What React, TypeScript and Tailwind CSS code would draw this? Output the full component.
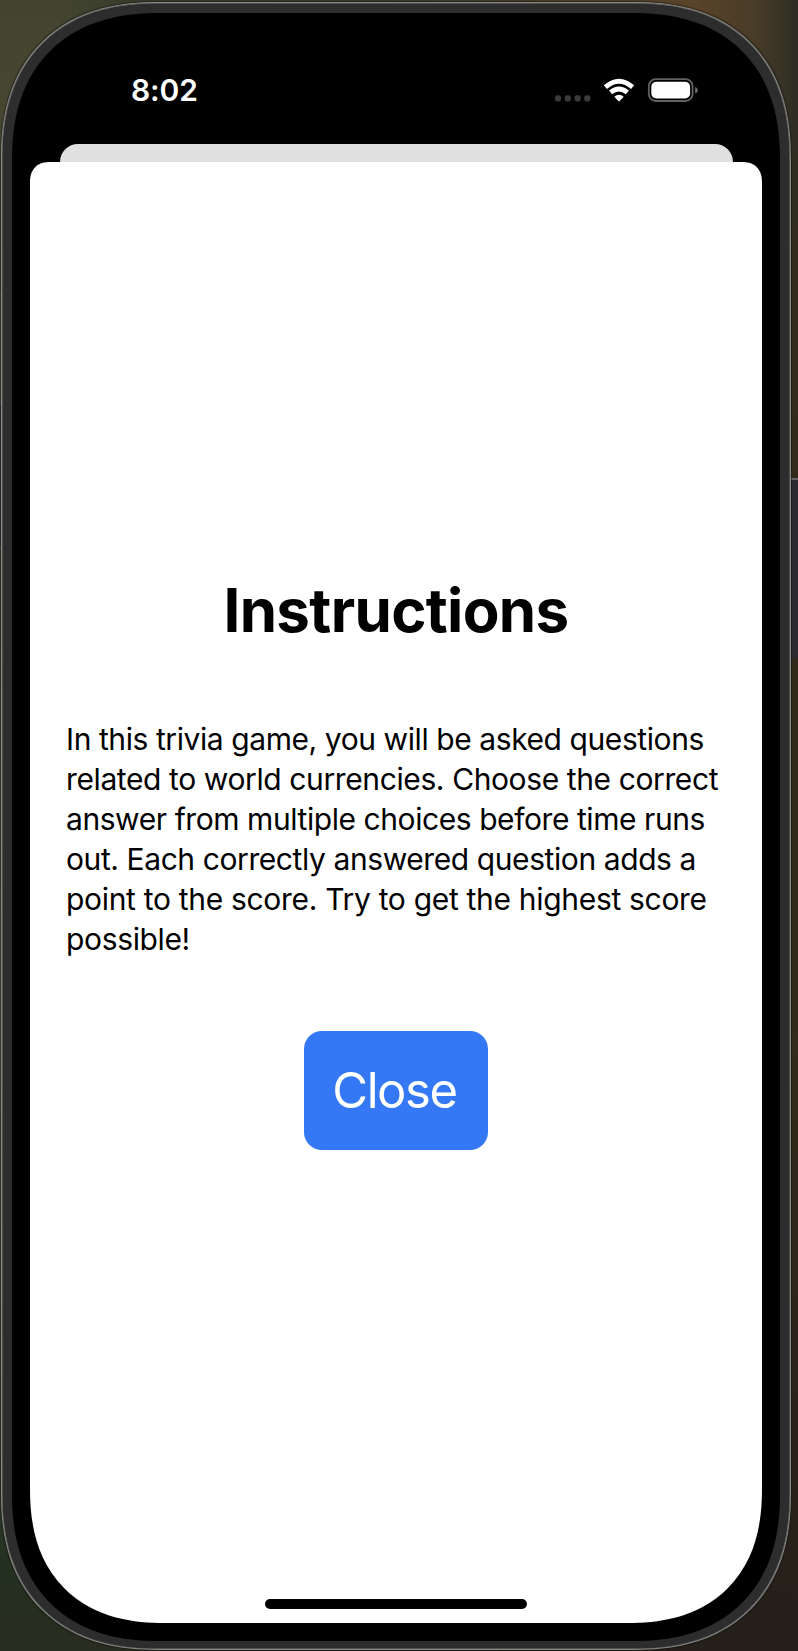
import React from "react";

const instructions: { text: string; spacing: string }[] = [
  { text: "In this trivia game, you will be asked questions", spacing: "tracking-[-0.42px]" },
  { text: "related to world currencies. Choose the correct", spacing: "tracking-[-0.39px]" },
  { text: "answer from multiple choices before time runs", spacing: "tracking-[-0.43px]" },
  { text: "out. Each correctly answered question adds a", spacing: "tracking-[-0.41px]" },
  { text: "point to the score. Try to get the highest score", spacing: "tracking-[-0.31px]" },
  { text: "possible!", spacing: "tracking-[-0.35px]" },
];

function StatusIcons() {
  return (
    <svg width="144" height="26" viewBox="554 77 144 26" className="block shrink-0">
      <g fill="#3b3b3b">
        <rect x="555" y="95.2" width="6" height="6.2" rx="2" />
        <rect x="564.8" y="95.2" width="6" height="6.2" rx="2" />
        <rect x="574.6" y="95.2" width="6" height="6.2" rx="2" />
        <rect x="584.3" y="95.2" width="6" height="6.2" rx="2" />
      </g>
      <g fill="none" stroke="#fff">
        <path d="M605.4 87.1 Q619 75.4 632.6 87.1" strokeWidth="4.9" />
        <path d="M610.6 92.4 Q619 85.4 627.4 92.4" strokeWidth="4.8" />
      </g>
      <path d="M614.3 96.8 Q619 92.7 623.7 96.8 L619.7 100.9 Q619 101.6 618.3 100.9 Z" fill="#fff" />
      <rect x="648.8" y="79.2" width="43.8" height="21.8" rx="7" fill="none" stroke="#626262" strokeWidth="1.8" />
      <rect x="651.3" y="81.8" width="38.8" height="16.6" rx="5" fill="#fff" />
      <path d="M695.2 86.8 Q697.8 88 697.8 90.2 Q697.8 92.4 695.2 93.6 Z" fill="#707070" />
    </svg>
  );
}

export default function App() {
  return (
    <div className="relative h-[1651px] w-[798px] overflow-hidden bg-[linear-gradient(to_bottom,#43442f_0%,#474631_8%,#3f402b_35%,#50583f_60%,#384630_85%,#233020_95%,#292c20_100%)] font-['Inter',sans-serif]">
      <div className="absolute top-0 left-[60px] h-[200px] w-[738px] bg-[linear-gradient(to_right,transparent,#333b2a_12%,#3a3a29_50%,#594329_86%,#493c28_94%,#2d2d23)]" />
      <div className="absolute top-[150px] right-0 h-[1501px] w-[300px] bg-[linear-gradient(to_bottom,#2e2d20,#332a19_25%,#33291c_60%,#241f19)]" />
      <div className="absolute top-[293px] left-0 h-[111px] w-[2px] border-y border-[#777] bg-[#4b4936]" />
      <div className="absolute top-[404px] left-0 h-[144px] w-[2px] border-b border-[#777] bg-[#373737]" />
      <div className="absolute top-[478px] left-[791px] h-[181px] w-[7px] border-t-2 border-[#656565] bg-[#2b2b2e]" />

      <div className="relative flex h-full flex-col pt-[2px] pr-[7px] pb-px pl-px">
        <div className="flex min-h-0 grow flex-col rounded-[138px] border border-[#858583] bg-[#2d2d2d] px-[10px] pt-[10px] pb-[8px] shadow-[inset_0_0_0_0.5px_#777775,0_0_1px_1px_rgba(20,20,15,0.5)] supports-[corner-shape:squircle]:rounded-[156px] supports-[corner-shape:squircle]:[corner-shape:superellipse(1.21)]">
          <div className="flex min-h-0 grow flex-col overflow-hidden rounded-[130px] bg-black px-[18px] pb-[18px] supports-[corner-shape:squircle]:rounded-[147px] supports-[corner-shape:squircle]:[corner-shape:superellipse(1.21)]">
            <header className="flex h-[131px] shrink-0 items-center justify-between pt-[23px] pr-[64px] pl-[101px]">
              <time className="text-[30px] leading-9 font-semibold tracking-[-0.1px] text-white">8:02</time>
              <StatusIcons />
            </header>
            <div className="mx-[29.5px] h-[18px] shrink-0 rounded-t-[18px] bg-[#e0e0e0]" />
            <main className="flex min-h-0 grow flex-col items-center rounded-t-[20px] rounded-b-[116px] bg-white supports-[corner-shape:squircle]:rounded-b-[134px] supports-[corner-shape:squircle]:[corner-shape:superellipse(1.22)]">
              <h1 className="mt-[412px] h-[72px] text-[60px] leading-[72px] font-bold tracking-[-0.65px] whitespace-nowrap text-black">Instructions</h1>
              <div className="mt-[73px] w-full pl-[36px] text-[30px] leading-[40px] text-black">
                {instructions.map((line) => (
                  <p key={line.text} className={`whitespace-nowrap ${line.spacing}`}>{line.text}</p>
                ))}
              </div>
              <button className="mt-[72px] flex h-[119px] w-[184px] shrink-0 items-center justify-center rounded-[18px] bg-[#3478f6] pr-[3px] text-[49px] leading-[60px] font-normal tracking-[-1.4px] text-white">
                Close
              </button>
              <div className="mt-auto mb-[14px] h-[10px] w-[262px] shrink-0 rounded-full bg-black" />
            </main>
          </div>
        </div>
      </div>
    </div>
  );
}
